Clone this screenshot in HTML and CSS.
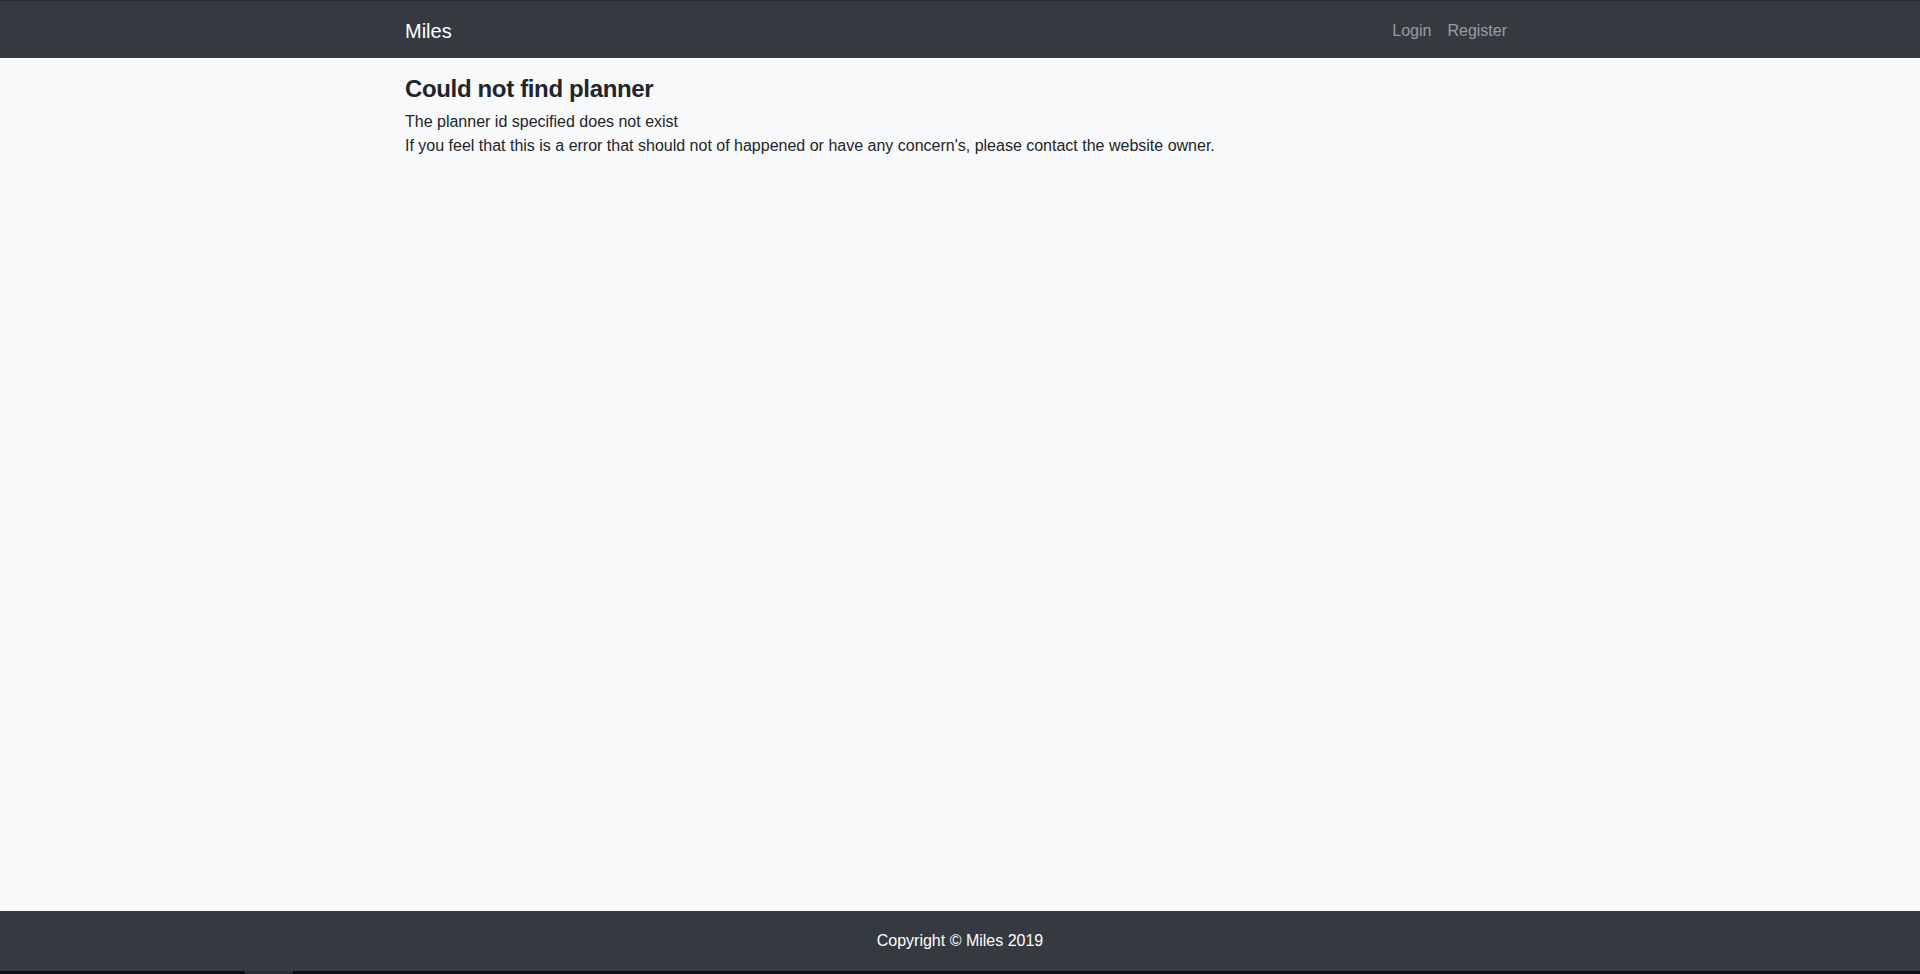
FILE: index.html
```html
<!DOCTYPE html>
<html lang="en">
<head>
<meta charset="utf-8">
<title>Miles</title>
<link rel="stylesheet" href="styles.css">
</head>
<body>
<div class="page">
  <nav class="navbar">
    <div class="container nav-inner">
      <a class="brand" href="#">Miles</a>
      <ul class="nav-links">
        <li><a href="#">Login</a></li>
        <li><a href="#">Register</a></li>
      </ul>
    </div>
  </nav>
  <main class="main">
    <div class="container">
      <h3 class="title">Could not find planner</h3>
      <p class="message">The planner id specified does not exist<br>If you feel that this is a error that should not of happened or have any concern's, please contact the website owner.</p>
    </div>
  </main>
  <footer class="footer">
    <p>Copyright © Miles 2019</p>
  </footer>
  <div class="bottom-strip"><span class="strip-tab"></span></div>
</div>
</body>
</html>
```
FILE: styles.css
```css
* { box-sizing: border-box; }
html, body { margin: 0; padding: 0; }
body {
  font-family: "Liberation Sans", Arial, sans-serif;
  font-size: 16px;
  line-height: 1.5;
  color: #212529;
  background: #f8f9fa;
}
.page {
  display: flex;
  flex-direction: column;
  height: 974px;
  overflow: hidden;
}
.container {
  width: 100%;
  max-width: 1140px;
  margin: 0 auto;
  padding: 0 15px;
}
.navbar {
  background: #343a40;
  border-top: 1px solid #2a2f34;
  padding: 10px 0 7px;
}
.nav-inner {
  display: flex;
  align-items: center;
  justify-content: space-between;
}
.brand {
  color: #fff;
  text-decoration: none;
  font-size: 20px;
  line-height: 30px;
  padding: 5px 0;
}
.nav-links {
  display: flex;
  list-style: none;
  margin: 0;
  padding: 0;
}
.nav-links a {
  display: block;
  padding: 8px;
  color: rgba(255,255,255,.5);
  text-decoration: none;
  line-height: 24px;
}
.main {
  flex: 1;
  padding-top: 17px;
}
.title {
  font-size: 24px;
  font-weight: 700;
  line-height: 1.2;
  letter-spacing: -0.35px;
  margin: 0 0 6px;
}
.message {
  margin: 0;
}
.footer {
  flex: none;
  background: #343a40;
  color: #fff;
  height: 60px;
  display: flex;
  align-items: center;
  justify-content: center;
}
.footer p { margin: 0; }
.bottom-strip {
  flex: none;
  height: 3px;
  background: #0b0f14;
  display: flex;
}
.strip-tab {
  margin-left: 245px;
  width: 48px;
  background: #2b2f35;
}
```
